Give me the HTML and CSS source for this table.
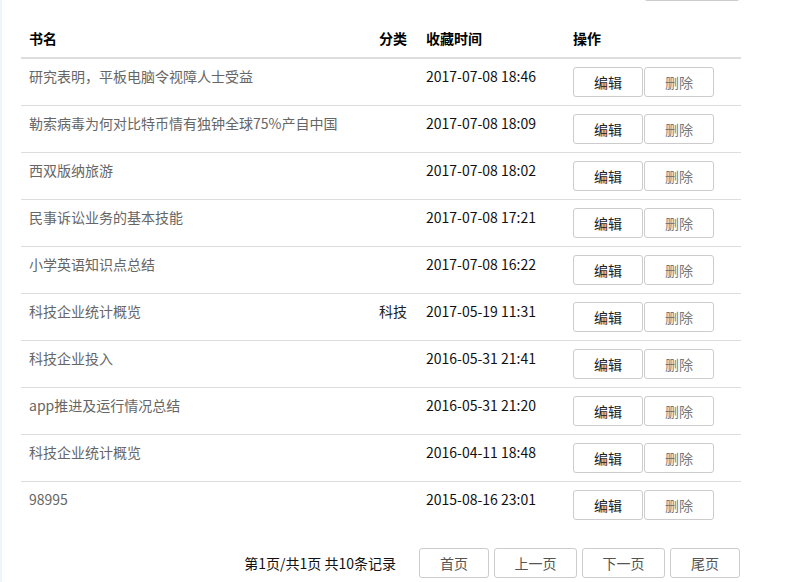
FILE: index.html
```html
<!DOCTYPE html>
<html lang="zh-CN">
<head>
<meta charset="utf-8">
<title>我的收藏</title>
<link rel="stylesheet" href="styles.css">
</head>
<body>
<div class="page">
  <div class="toolbar"><button class="tool-btn" aria-label="添加收藏"></button></div>
  <table class="fav-table">
    <thead>
      <tr>
        <th class="c-name">书名</th>
        <th class="c-cat">分类</th>
        <th class="c-time">收藏时间</th>
        <th class="c-ops">操作</th>
      </tr>
    </thead>
    <tbody>
      <tr><td class="c-name">研究表明，平板电脑令视障人士受益</td><td class="c-cat"></td><td class="c-time">2017-07-08 18:46</td><td class="c-ops"><div class="ops"><button class="btn btn-edit">编辑</button><button class="btn btn-del">删除</button></div></td></tr>
      <tr><td class="c-name">勒索病毒为何对比特币情有独钟全球75%产自中国</td><td class="c-cat"></td><td class="c-time">2017-07-08 18:09</td><td class="c-ops"><div class="ops"><button class="btn btn-edit">编辑</button><button class="btn btn-del">删除</button></div></td></tr>
      <tr><td class="c-name">西双版纳旅游</td><td class="c-cat"></td><td class="c-time">2017-07-08 18:02</td><td class="c-ops"><div class="ops"><button class="btn btn-edit">编辑</button><button class="btn btn-del">删除</button></div></td></tr>
      <tr><td class="c-name">民事诉讼业务的基本技能</td><td class="c-cat"></td><td class="c-time">2017-07-08 17:21</td><td class="c-ops"><div class="ops"><button class="btn btn-edit">编辑</button><button class="btn btn-del">删除</button></div></td></tr>
      <tr><td class="c-name">小学英语知识点总结</td><td class="c-cat"></td><td class="c-time">2017-07-08 16:22</td><td class="c-ops"><div class="ops"><button class="btn btn-edit">编辑</button><button class="btn btn-del">删除</button></div></td></tr>
      <tr><td class="c-name">科技企业统计概览</td><td class="c-cat">科技</td><td class="c-time">2017-05-19 11:31</td><td class="c-ops"><div class="ops"><button class="btn btn-edit">编辑</button><button class="btn btn-del">删除</button></div></td></tr>
      <tr><td class="c-name">科技企业投入</td><td class="c-cat"></td><td class="c-time">2016-05-31 21:41</td><td class="c-ops"><div class="ops"><button class="btn btn-edit">编辑</button><button class="btn btn-del">删除</button></div></td></tr>
      <tr><td class="c-name">app推进及运行情况总结</td><td class="c-cat"></td><td class="c-time">2016-05-31 21:20</td><td class="c-ops"><div class="ops"><button class="btn btn-edit">编辑</button><button class="btn btn-del">删除</button></div></td></tr>
      <tr><td class="c-name">科技企业统计概览</td><td class="c-cat"></td><td class="c-time">2016-04-11 18:48</td><td class="c-ops"><div class="ops"><button class="btn btn-edit">编辑</button><button class="btn btn-del">删除</button></div></td></tr>
      <tr class="last"><td class="c-name">98995</td><td class="c-cat"></td><td class="c-time">2015-08-16 23:01</td><td class="c-ops"><div class="ops"><button class="btn btn-edit">编辑</button><button class="btn btn-del">删除</button></div></td></tr>
    </tbody>
  </table>
  <div class="pager">
    <span class="pager-info">第1页/共1页 共10条记录</span>
    <button class="pbtn pbtn-sm">首页</button>
    <button class="pbtn pbtn-lg">上一页</button>
    <button class="pbtn pbtn-lg">下一页</button>
    <button class="pbtn pbtn-sm">尾页</button>
  </div>
</div>
</body>
</html>
```

FILE: styles.css
```css
html, body {
  margin: 0;
  padding: 0;
  background: #fff;
  overflow: hidden;
}
body {
  font-family: "Noto Sans CJK SC", "Microsoft YaHei", sans-serif;
  font-size: 14px;
  line-height: 20px;
  color: #333;
}
.page {
  display: flow-root;
  border-left: 2px solid #edf4fc;
  padding: 0 0 0 19px;
  width: 720px;
  height: 582px;
}
.toolbar {
  display: flex;
  justify-content: flex-end;
  margin-top: -30px;
  padding-right: 1px;
}
.tool-btn {
  width: 96px;
  height: 31px;
  border: 1px solid #ccc;
  border-radius: 3px;
  background: #fff;
}
.fav-table {
  margin-top: 20px;
  width: 720px;
  border-collapse: collapse;
  table-layout: fixed;
}
.fav-table th,
.fav-table td {
  padding: 8px;
  text-align: left;
  vertical-align: top;
  white-space: nowrap;
}
.fav-table th {
  font-weight: bold;
  color: #000;
  padding-top: 7px;
  padding-bottom: 9px;
  border-bottom: 2px solid #ddd;
}
.fav-table td {
  border-bottom: 1px solid #ddd;
}
.fav-table td.c-name,
.fav-table td.c-cat,
.fav-table td.c-time {
  padding-top: 7px;
  padding-bottom: 9px;
}
.fav-table tr.last td {
  border-bottom: none;
}
.c-name { width: 334px; }
.c-cat { width: 31px; }
.c-time { width: 131px; }
.c-ops { width: 160px; }
td.c-name { color: #666; }
td.c-cat { color: #222; }
td.c-time { color: #111; }
.ops {
  display: flex;
  gap: 1px;
}
.btn,
.pbtn {
  height: 30px;
  padding: 0;
  border: 1px solid #ccc;
  border-radius: 3px;
  background: #fff;
  font-family: inherit;
  font-size: 14px;
  line-height: 20px;
  white-space: nowrap;
}
.btn { width: 70px; }
.btn-edit { color: #222; }
.btn-del { color: #777; }
.pager {
  margin-top: 20px;
  padding-right: 1px;
  display: flex;
  justify-content: flex-end;
  align-items: center;
  gap: 5px;
}
.pager-info {
  color: #111;
  margin-right: 18px;
}
.pbtn { color: #555; }
.pbtn-sm { width: 70px; }
.pbtn-lg { width: 83px; }
```
